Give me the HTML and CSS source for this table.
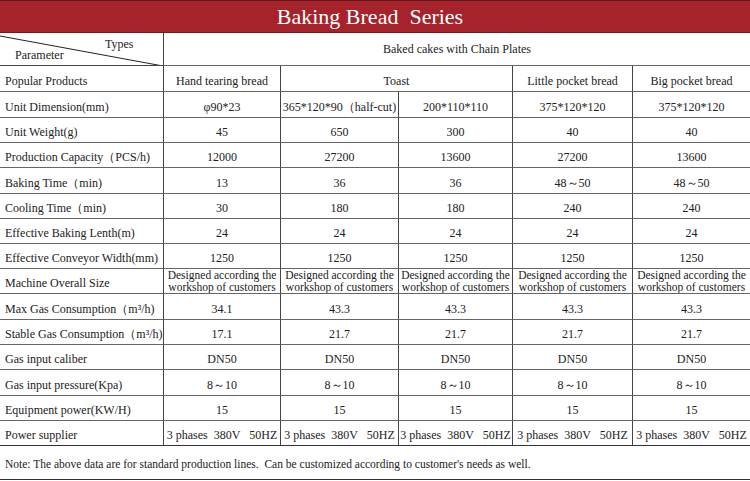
FILE: index.html
```html
<!DOCTYPE html>
<html>
<head>
<meta charset="utf-8">
<link rel="stylesheet" href="styles.css">
</head>
<body>
<div class="page">
  <div class="titlebar">Baking Bread&nbsp; Series</div>
  <div class="grid">
    <div class="cell diag">
      <svg class="diagline" width="163" height="33" viewBox="0 0 163 33"><line x1="0" y1="3" x2="163" y2="33" stroke="#222" stroke-width="1"/></svg>
      <span class="types">Types</span>
      <span class="param">Parameter</span>
    </div>
    <div class="cell v span5">Baked cakes with Chain Plates</div>

    <div class="cell p">Popular Products</div>
    <div class="cell v">Hand tearing bread</div>
    <div class="cell v span2">Toast</div>
    <div class="cell v">Little pocket bread</div>
    <div class="cell v">Big pocket bread</div>

    <div class="cell p">Unit Dimension(mm)</div>
    <div class="cell v">φ90*23</div>
    <div class="cell v">365*120*90（half-cut)</div>
    <div class="cell v">200*110*110</div>
    <div class="cell v">375*120*120</div>
    <div class="cell v">375*120*120</div>

    <div class="cell p">Unit Weight(g)</div>
    <div class="cell v">45</div>
    <div class="cell v">650</div>
    <div class="cell v">300</div>
    <div class="cell v">40</div>
    <div class="cell v">40</div>

    <div class="cell p">Production Capacity（PCS/h)</div>
    <div class="cell v">12000</div>
    <div class="cell v">27200</div>
    <div class="cell v">13600</div>
    <div class="cell v">27200</div>
    <div class="cell v">13600</div>

    <div class="cell p">Baking Time（min)</div>
    <div class="cell v">13</div>
    <div class="cell v">36</div>
    <div class="cell v">36</div>
    <div class="cell v">48～50</div>
    <div class="cell v">48～50</div>

    <div class="cell p">Cooling Time（min)</div>
    <div class="cell v">30</div>
    <div class="cell v">180</div>
    <div class="cell v">180</div>
    <div class="cell v">240</div>
    <div class="cell v">240</div>

    <div class="cell p">Effective Baking Lenth(m)</div>
    <div class="cell v">24</div>
    <div class="cell v">24</div>
    <div class="cell v">24</div>
    <div class="cell v">24</div>
    <div class="cell v">24</div>

    <div class="cell p">Effective Conveyor Width(mm)</div>
    <div class="cell v">1250</div>
    <div class="cell v">1250</div>
    <div class="cell v">1250</div>
    <div class="cell v">1250</div>
    <div class="cell v">1250</div>

    <div class="cell p">Machine Overall Size</div>
    <div class="cell v two">Designed according the<br>workshop of customers</div>
    <div class="cell v two">Designed according the<br>workshop of customers</div>
    <div class="cell v two">Designed according the<br>workshop of customers</div>
    <div class="cell v two">Designed according the<br>workshop of customers</div>
    <div class="cell v two">Designed according the<br>workshop of customers</div>

    <div class="cell p">Max Gas Consumption（m³/h)</div>
    <div class="cell v">34.1</div>
    <div class="cell v">43.3</div>
    <div class="cell v">43.3</div>
    <div class="cell v">43.3</div>
    <div class="cell v">43.3</div>

    <div class="cell p">Stable Gas Consumption（m³/h)</div>
    <div class="cell v">17.1</div>
    <div class="cell v">21.7</div>
    <div class="cell v">21.7</div>
    <div class="cell v">21.7</div>
    <div class="cell v">21.7</div>

    <div class="cell p">Gas input caliber</div>
    <div class="cell v">DN50</div>
    <div class="cell v">DN50</div>
    <div class="cell v">DN50</div>
    <div class="cell v">DN50</div>
    <div class="cell v">DN50</div>

    <div class="cell p">Gas input pressure(Kpa)</div>
    <div class="cell v">8～10</div>
    <div class="cell v">8～10</div>
    <div class="cell v">8～10</div>
    <div class="cell v">8～10</div>
    <div class="cell v">8～10</div>

    <div class="cell p">Equipment power(KW/H)</div>
    <div class="cell v">15</div>
    <div class="cell v">15</div>
    <div class="cell v">15</div>
    <div class="cell v">15</div>
    <div class="cell v">15</div>

    <div class="cell p last">Power supplier</div>
    <div class="cell v last">3 phases&nbsp; 380V&nbsp;&nbsp; 50HZ</div>
    <div class="cell v last">3 phases&nbsp; 380V&nbsp;&nbsp; 50HZ</div>
    <div class="cell v last">3 phases&nbsp; 380V&nbsp;&nbsp; 50HZ</div>
    <div class="cell v last">3 phases&nbsp; 380V&nbsp;&nbsp; 50HZ</div>
    <div class="cell v last">3 phases&nbsp; 380V&nbsp;&nbsp; 50HZ</div>

    <div class="cell note">Note: The above data are for standard production lines.&nbsp; Can be customized according to customer's needs as well.</div>
  </div>
</div>
</body>
</html>
```

FILE: styles.css
```css
* { box-sizing: border-box; }
html, body { margin: 0; padding: 0; background: #fff; }
body {
  font-family: "Liberation Serif", "Times New Roman", serif;
  color: #222;
  width: 750px;
  overflow: hidden;
}
.page { width: 750px; }
.titlebar {
  height: 33px;
  background: #a6232b;
  border-top: 1px solid #5e1a1d;
  border-bottom: 1px solid #6e1a1f;
  color: #fff;
  font-size: 22px;
  line-height: 31px;
  text-align: center;
  white-space: pre;
  padding-right: 10px;
}
.grid {
  display: grid;
  grid-template-columns: 163px 117px 118px 114px 120px 118px;
  grid-template-rows: 33px 26px 26px 25px 25px 26px 25px 25px 25px 25px 26px 25px 25px 26px 25px 25px 34px;
}
.cell {
  border-bottom: 1px solid #666;
  font-size: 12px;
  display: flex;
  align-items: center;
  white-space: nowrap;
  overflow: hidden;
  padding-top: 5px;
}
.p { padding-left: 5px; }
.v {
  border-left: 1px solid #444;
  justify-content: center;
  text-align: center;
}
.span5 { grid-column: span 5; padding-top: 0; }
.span2 { grid-column: span 2; }
.two { line-height: 11.5px; font-size: 11.5px; padding-top: 1px; }
.last { border-bottom: 1px solid #333; }
.note {
  grid-column: span 6;
  padding-left: 5px;
  padding-top: 3px;
  font-size: 11.5px;
  border-bottom: 1px solid #333;
}
.diag {
  position: relative;
  border-bottom: 1px solid #444;
  padding-top: 0;
}
.diagline { position: absolute; left: 0; top: 0; }
.types { position: absolute; left: 105px; top: 4px; }
.param { position: absolute; left: 15px; top: 15px; }
```
